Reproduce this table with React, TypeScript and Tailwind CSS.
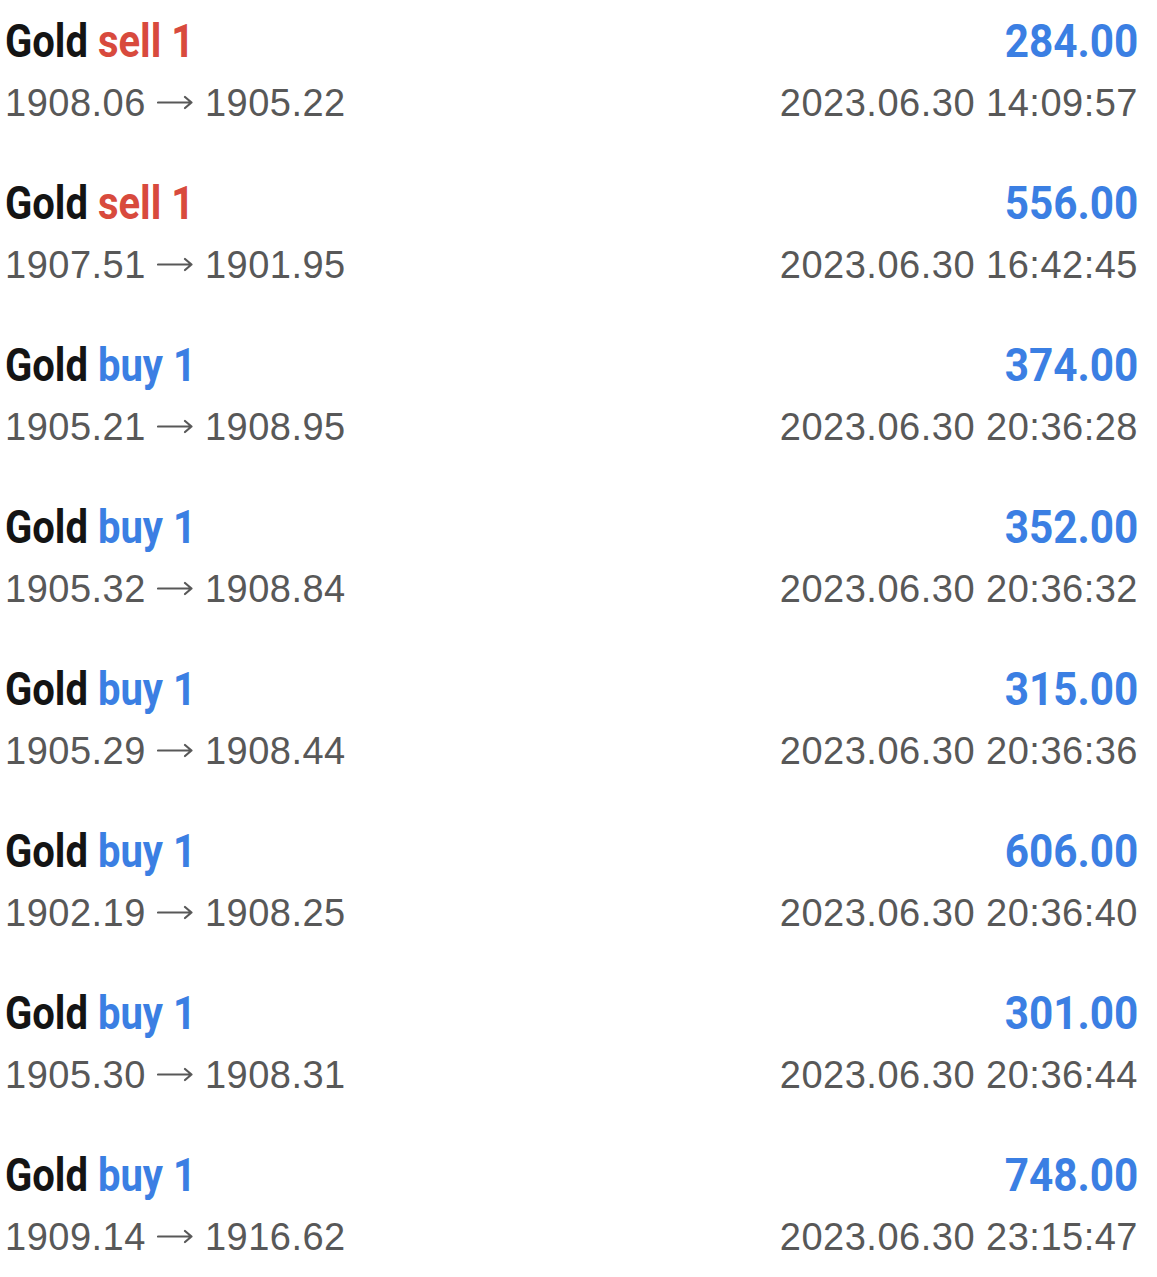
import React from "react";

type Trade = {
  side: "sell" | "buy";
  open: string;
  close: string;
  profit: string;
  time: string;
};

const trades: Trade[] = [
  { side: "sell", open: "1908.06", close: "1905.22", profit: "284.00", time: "2023.06.30 14:09:57" },
  { side: "sell", open: "1907.51", close: "1901.95", profit: "556.00", time: "2023.06.30 16:42:45" },
  { side: "buy", open: "1905.21", close: "1908.95", profit: "374.00", time: "2023.06.30 20:36:28" },
  { side: "buy", open: "1905.32", close: "1908.84", profit: "352.00", time: "2023.06.30 20:36:32" },
  { side: "buy", open: "1905.29", close: "1908.44", profit: "315.00", time: "2023.06.30 20:36:36" },
  { side: "buy", open: "1902.19", close: "1908.25", profit: "606.00", time: "2023.06.30 20:36:40" },
  { side: "buy", open: "1905.30", close: "1908.31", profit: "301.00", time: "2023.06.30 20:36:44" },
  { side: "buy", open: "1909.14", close: "1916.62", profit: "748.00", time: "2023.06.30 23:15:47" },
];

const Arrow = () => (
  <svg width="36" height="27" viewBox="0 0 36 27" className="inline-block align-baseline ml-[11px] mr-[12px]">
    <path d="M1 13.5H34.5M28 8L34.5 13.5L28 19" fill="none" stroke="#585858" strokeWidth="2.2" strokeLinecap="round" strokeLinejoin="round" />
  </svg>
);

const Row = ({ t }: { t: Trade }) => {
  return (
    <div className="h-[162px] flex flex-col">
      <div className="flex justify-between h-[46px] text-[46px] leading-[46px] font-bold font-['Roboto',sans-serif]">
        <span className="inline-block origin-left scale-x-[0.87] whitespace-nowrap">
          <span className="text-[#141414]">Gold </span>
          <span className={t.side === "sell" ? "text-[#d84a3d]" : "text-[#3b7fe3]"}>{t.side} 1</span>
        </span>
        <span className="inline-block origin-right scale-x-[0.92] text-[#3b7fe3]">{t.profit}</span>
      </div>
      <div className="flex justify-between mt-[20px] h-[38px] text-[38px] leading-[38px] text-[#585858] tracking-[0.5px] font-['Liberation_Sans',sans-serif]">
        <span className="whitespace-nowrap">
          {t.open}
          <Arrow />
          {t.close}
        </span>
        <span className="whitespace-nowrap">{t.time}</span>
      </div>
    </div>
  );
};

const App = () => {
  return (
    <div className="w-[1157px] h-[1277px] bg-white pt-[18px] pl-[5px] pr-[19px] overflow-hidden">
      {trades.map((t, i) => (
        <Row key={i} t={t} />
      ))}
    </div>
  );
};

export default App;
